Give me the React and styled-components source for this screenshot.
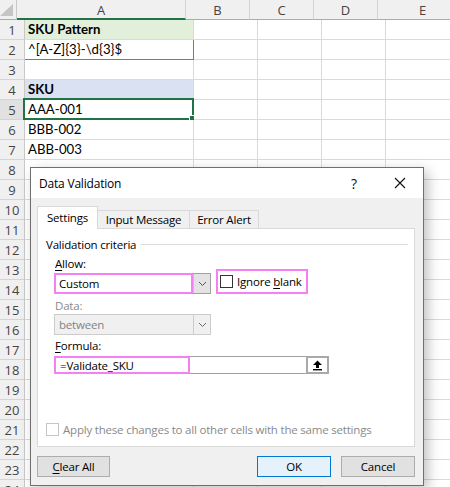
import styled, { createGlobalStyle } from "styled-components";

const GlobalStyle = createGlobalStyle`
  html, body { margin: 0; padding: 0; background: #fff; }
  body { width: 450px; height: 487px; overflow: hidden; }
  * { box-sizing: border-box; }
`;

const MAGENTA = "#f57ff5";

const COLS = [
  { key: "A", width: 169 },
  { key: "B", width: 64 },
  { key: "C", width: 64 },
  { key: "D", width: 64 },
  { key: "E", width: 90 },
];

const CELLS = {
  1: { text: "SKU Pattern", bold: true, bg: "#e2efda" },
  2: { text: "^[A-Z]{3}-\\d{3}$", boxed: true },
  4: { text: "SKU", bold: true, bg: "#d9e1f2" },
  5: { text: "AAA-001", selected: true },
  6: { text: "BBB-002" },
  7: { text: "ABB-003" },
};

const ROWS = Array.from({ length: 24 }, (_, i) => i + 1);

/* ---------- sheet ---------- */

const Sheet = styled.div`
  position: relative;
  width: 450px;
  height: 487px;
  overflow: hidden;
`;

const Row = styled.div`
  display: flex;
  height: 20px;
`;

const Corner = styled.div`
  width: 25px;
  height: 20px;
  background: #f0f0f0;
  border-right: 1px solid #c8c8c8;
  border-bottom: 1px solid #ababab;
  display: flex;
  align-items: flex-end;
  justify-content: flex-end;
  padding: 0 3px 3px 0;
`;

const ColHead = styled.div`
  width: ${(p) => p.$w}px;
  flex: none;
  height: 20px;
  background: #f0f0f0;
  border-right: 1px solid #d4d4d4;
  border-bottom: ${(p) => (p.$active ? "2px solid #217346" : "1px solid #ababab")};
  font-family: "Open Sans", sans-serif;
  font-size: 13px;
  color: #444;
  display: flex;
  align-items: center;
  justify-content: center;
  padding-top: ${(p) => (p.$active ? "1px" : "0")};
`;

const RowHead = styled.div`
  width: 25px;
  flex: none;
  height: 20px;
  background: ${(p) => (p.$active ? "#e1e1e1" : "#f0f0f0")};
  border-right: 1px solid #c8c8c8;
  border-bottom: 1px solid #d4d4d4;
  font-family: "Open Sans", sans-serif;
  font-size: 13px;
  color: #444;
  display: flex;
  align-items: center;
  justify-content: center;
`;

const Cell = styled.div`
  position: relative;
  width: ${(p) => p.$w}px;
  flex: none;
  height: 20px;
  background: ${(p) => p.$bg || "#fff"};
  border-right: 1px solid ${(p) => (p.$boxed ? "#7b7b7b" : "#dadada")};
  border-bottom: 1px solid ${(p) => (p.$boxed ? "#7b7b7b" : "#dadada")};
  font-family: Lato, "Liberation Sans", sans-serif;
  font-size: 13.2px;
  font-weight: ${(p) => (p.$bold ? 700 : 400)};
  color: #000;
  line-height: 19px;
  padding-left: 3px;
  white-space: nowrap;
`;

const Selection = styled.div`
  position: absolute;
  left: -2px;
  top: -2px;
  right: -1px;
  bottom: -1px;
  border: 2px solid #217346;
  pointer-events: none;
`;

const FillHandle = styled.div`
  position: absolute;
  right: -4px;
  bottom: -4px;
  width: 7px;
  height: 7px;
  background: #217346;
  border: 1px solid #fff;
`;

/* ---------- dialog ---------- */

const Dialog = styled.div`
  position: absolute;
  left: 30px;
  top: 167px;
  width: 394px;
  height: 319px;
  border: 1px solid #6f6f6f;
  background: #f0f0f0;
  box-shadow: 4px 4px 12px rgba(0, 0, 0, 0.25);
  display: flex;
  flex-direction: column;
  font-family: "Open Sans", sans-serif;
  font-size: 11.5px;
  letter-spacing: -0.2px;
  color: #000;
`;

const TitleBar = styled.div`
  height: 30px;
  flex: none;
  background: #fff;
  display: flex;
  align-items: center;
  padding-left: 8px;
`;

const Title = styled.div`
  flex: 1;
  font-size: 12px;
`;

const TitleButton = styled.div`
  width: 46px;
  height: 30px;
  display: flex;
  align-items: center;
  justify-content: center;
  font-size: 14px;
  color: #111;
`;

const Body = styled.div`
  flex: 1;
  display: flex;
  flex-direction: column;
  padding: 8px 8px 8px 6px;
`;

const Tabs = styled.div`
  display: flex;
  align-items: flex-end;
  height: 22px;
  position: relative;
  z-index: 1;
`;

const Tab = styled.div`
  width: ${(p) => p.$w}px;
  height: ${(p) => (p.$active ? 23 : 18)}px;
  margin-bottom: ${(p) => (p.$active ? -1 : 0)}px;
  background: ${(p) => (p.$active ? "#fff" : "#f0f0f0")};
  border: 1px solid #d9d9d9;
  border-bottom: none;
  border-left: ${(p) => (p.$first ? "1px solid #d9d9d9" : "none")};
  display: flex;
  align-items: center;
  justify-content: center;
  padding-bottom: ${(p) => (p.$active ? 2 : 0)}px;
`;

const Panel = styled.div`
  height: 219px;
  background: #fff;
  border: 1px solid #d9d9d9;
  padding: 8px 6px 0 8px;
  display: flex;
  flex-direction: column;
`;

const Legend = styled.div`
  display: flex;
  align-items: center;
  line-height: 15px;
  &::after {
    content: "";
    flex: 1;
    height: 1px;
    background: #dcdcdc;
    margin-left: 5px;
  }
`;

const Group = styled.div`
  display: flex;
  flex-direction: column;
  padding-left: 8px;
`;

const Label = styled.div`
  line-height: 15px;
  margin-top: ${(p) => p.$mt || 0}px;
  padding-left: 1px;
  color: ${(p) => (p.$disabled ? "#8a8a8a" : "#000")};
`;

const U = styled.span`
  text-decoration: underline;
  text-underline-offset: 2px;
`;

const FieldRow = styled.div`
  display: flex;
  align-items: center;
  margin-top: ${(p) => p.$mt || 0}px;
`;

const Combo = styled.div`
  width: 157px;
  height: 21px;
  display: flex;
  border: 1px solid ${(p) => (p.$disabled ? "#cccccc" : "#a0a0a0")};
  background: ${(p) => (p.$disabled ? "#f0f0f0" : "#fff")};
`;

const ComboText = styled.div`
  flex: 1;
  display: flex;
  align-items: center;
  margin: ${(p) => (p.$highlight ? "-1px 0 -1px -1px" : "0")};
  border: ${(p) => (p.$highlight ? `2px solid ${MAGENTA}` : "none")};
  padding-left: ${(p) => (p.$highlight ? 3 : 4)}px;
  color: ${(p) => (p.$disabled ? "#838383" : "#000")};
`;

const ComboArrow = styled.div`
  width: 17px;
  flex: none;
  display: flex;
  align-items: center;
  justify-content: center;
  background: ${(p) => (p.$disabled ? "#f0f0f0" : "#e3e3e3")};
  border-left: 1px solid ${(p) => (p.$disabled ? "#cccccc" : "#c4c4c4")};
`;

const HighlightBox = styled.label`
  display: flex;
  align-items: center;
  width: 92px;
  height: 25px;
  margin-left: 5px;
  margin-top: -4px;
  padding: 0 0 0 2px;
  border: 2px solid ${MAGENTA};
  white-space: nowrap;
`;

const CheckBox = styled.span`
  width: 13px;
  height: 13px;
  flex: none;
  background: #fff;
  border: 1px solid ${(p) => (p.$disabled ? "#c6c6c6" : "#333")};
  margin-right: 4px;
`;

const FormulaBox = styled.div`
  width: 275px;
  height: 18px;
  display: flex;
  border: 1px solid #a0a0a0;
  background: #fff;
`;

const FormulaText = styled.div`
  width: 136px;
  margin: -1px 0 -1px -1px;
  border: 2px solid ${MAGENTA};
  padding-left: 4px;
  display: flex;
  align-items: center;
`;

const CollapseButton = styled.div`
  width: 23px;
  margin: -1px -1px -1px auto;
  border: 2px solid #a9a9a9;
  background: #fff;
  display: flex;
  align-items: center;
  justify-content: center;
`;

const ApplyRow = styled.div`
  display: flex;
  align-items: center;
  margin-top: 48px;
  color: #8a8a8a;
`;

const Footer = styled.div`
  display: flex;
  justify-content: space-between;
  margin-top: 9px;
`;

const ButtonGroup = styled.div`
  display: flex;
  gap: 10px;
`;

const Button = styled.div`
  width: ${(p) => p.$w || 74}px;
  height: 21px;
  display: flex;
  align-items: center;
  justify-content: center;
  background: ${(p) => (p.$primary ? "#e5f1fb" : "#e1e1e1")};
  border: 1px solid ${(p) => (p.$primary ? "#0078d7" : "#adadad")};
`;

function Chevron({ color = "#555" }) {
  return (
    <svg width="9" height="6" viewBox="0 0 9 6">
      <polyline points="1,1 4.5,4.5 8,1" fill="none" stroke={color} strokeWidth="1" />
    </svg>
  );
}

function SheetGrid() {
  return (
    <>
      <Row>
        <Corner>
          <svg width="13" height="12" viewBox="0 0 13 12">
            <polygon points="13,0 13,12 0,12" fill="#c4c4c4" />
          </svg>
        </Corner>
        {COLS.map((c) => (
          <ColHead key={c.key} $w={c.width} $active={c.key === "A"}>
            {c.key}
          </ColHead>
        ))}
      </Row>
      {ROWS.map((r) => {
        const cell = CELLS[r] || {};
        return (
          <Row key={r}>
            <RowHead $active={cell.selected}>{r}</RowHead>
            {COLS.map((c) =>
              c.key === "A" ? (
                <Cell
                  key={c.key}
                  $w={c.width}
                  $bg={cell.bg}
                  $bold={cell.bold}
                  $boxed={cell.boxed}
                >
                  {cell.text}
                  {cell.selected && (
                    <Selection>
                      <FillHandle />
                    </Selection>
                  )}
                </Cell>
              ) : (
                <Cell key={c.key} $w={c.width} />
              )
            )}
          </Row>
        );
      })}
    </>
  );
}

function DataValidationDialog() {
  return (
    <Dialog>
      <TitleBar>
        <Title>Data Validation</Title>
        <TitleButton>?</TitleButton>
        <TitleButton>
          <svg width="12" height="12" viewBox="0 0 12 12">
            <path d="M1 1 L11 11 M11 1 L1 11" stroke="#111" strokeWidth="1.1" />
          </svg>
        </TitleButton>
      </TitleBar>
      <Body>
        <Tabs>
          <Tab $w={61} $active $first>
            Settings
          </Tab>
          <Tab $w={92}>Input Message</Tab>
          <Tab $w={69}>Error Alert</Tab>
        </Tabs>
        <Panel>
          <Legend>Validation criteria</Legend>
          <Group>
            <Label $mt={4}>
              <U>A</U>llow:
            </Label>
            <FieldRow $mt={2}>
              <Combo>
                <ComboText $highlight>Custom</ComboText>
                <ComboArrow>
                  <Chevron />
                </ComboArrow>
              </Combo>
              <HighlightBox>
                <CheckBox />
                Ignore&nbsp;<U>b</U>lank
              </HighlightBox>
            </FieldRow>
            <Label $mt={4} $disabled>
              Data:
            </Label>
            <FieldRow $mt={1}>
              <Combo $disabled>
                <ComboText $disabled>between</ComboText>
                <ComboArrow $disabled>
                  <Chevron color="#6a6a6a" />
                </ComboArrow>
              </Combo>
            </FieldRow>
            <Label $mt={3}>
              <U>F</U>ormula:
            </Label>
            <FieldRow $mt={3}>
              <FormulaBox>
                <FormulaText>=Validate_SKU</FormulaText>
                <CollapseButton>
                  <svg width="11" height="11" viewBox="0 0 11 11">
                    <path d="M5.5 0.5 L10 5 L7 5 L7 8 L4 8 L4 5 L1 5 Z" fill="#000" />
                    <rect x="1" y="9" width="9" height="1.4" fill="#000" />
                  </svg>
                </CollapseButton>
              </FormulaBox>
            </FieldRow>
          </Group>
          <ApplyRow>
            <CheckBox $disabled />
            Apply these changes to all other cells with the same settings
          </ApplyRow>
        </Panel>
        <Footer>
          <Button $w={73}>
            <U>C</U>lear All
          </Button>
          <ButtonGroup>
            <Button $primary>OK</Button>
            <Button>Cancel</Button>
          </ButtonGroup>
        </Footer>
      </Body>
    </Dialog>
  );
}

export default function App() {
  return (
    <>
      <GlobalStyle />
      <Sheet>
        <SheetGrid />
        <DataValidationDialog />
      </Sheet>
    </>
  );
}
